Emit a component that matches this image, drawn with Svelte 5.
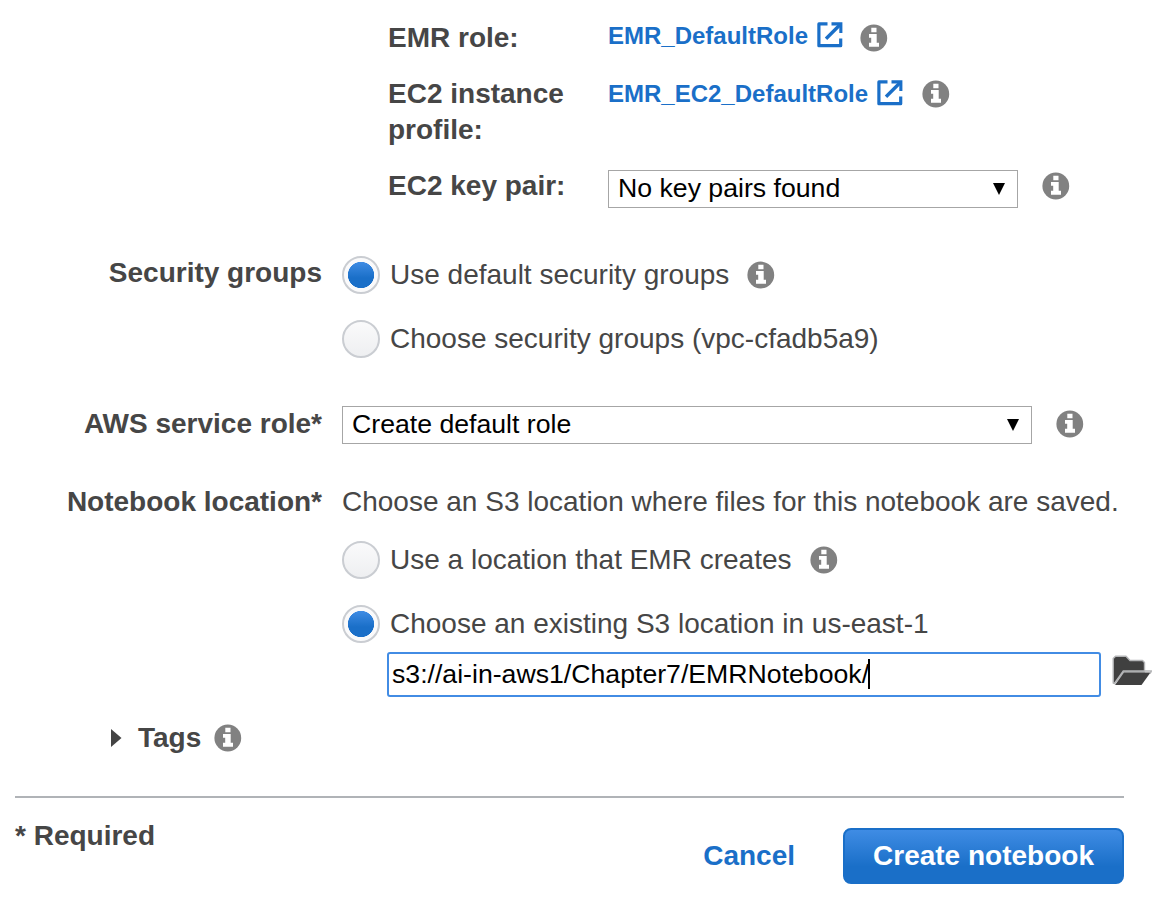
<script>
  let securityGroup = $state('default');
  let location = $state('existing');
  let path = $state('s3://ai-in-aws1/Chapter7/EMRNotebook/');
</script>

{#snippet info(cls)}
  <svg class="info {cls}" viewBox="0 0 28 28" width="28" height="28">
    <circle cx="13.8" cy="14" r="13.4" fill="#818181" />
    <path fill="#fff" d="M11.300 3.700h5.200V8.200h-5.200zM9 9.900h7.700v8.900H19v4H9v-4h2.200v-5H9z" />
  </svg>
{/snippet}

{#snippet external()}
  <svg class="ext" viewBox="0 0 26 26" width="26" height="26">
    <path fill="none" stroke="#1a6fc8" stroke-width="3.200" stroke-linejoin="round" d="M10.500 1.900H1.900V23.700H23.700V16.500" />
    <path fill="none" stroke="#1a6fc8" stroke-width="3.400" d="M9 16.700L23 2.700" />
    <path fill="#1a6fc8" d="M14.500 .3h10.900V11h-3.100V3.400h-7.800z" />
  </svg>
{/snippet}

{#snippet radio(on, pick)}
  <button class="radio" class:on onclick={pick} aria-label="option"></button>
{/snippet}

<main>
  <section class="cluster">
    <div class="row r1">
      <b class="name">EMR role:</b>
      <a class="link" href="#top">EMR_DefaultRole{@render external()}</a>
      {@render info('i1')}
    </div>
    <div class="row r2">
      <b class="name">EC2 instance profile:</b>
      <a class="link" href="#top">EMR_EC2_DefaultRole{@render external()}</a>
      {@render info('i2')}
    </div>
    <div class="row r3">
      <b class="name">EC2 key pair:</b>
      <div class="select key"><span>No key pairs found</span><i></i></div>
      {@render info('i3')}
    </div>
  </section>

  <section class="row security">
    <b class="label">Security groups</b>
    <div class="field">
      <div class="option">
        {@render radio(securityGroup === 'default', () => (securityGroup = 'default'))}
        <span>Use default security groups</span>
        {@render info('i4')}
      </div>
      <div class="option">
        {@render radio(securityGroup === 'choose', () => (securityGroup = 'choose'))}
        <span>Choose security groups (vpc-cfadb5a9)</span>
      </div>
    </div>
  </section>

  <section class="row service">
    <b class="label">AWS service role*</b>
    <div class="select role"><span>Create default role</span><i></i></div>
    {@render info('i5')}
  </section>

  <section class="row location">
    <b class="label">Notebook location*</b>
    <div class="field">
      <p>Choose an S3 location where files for this notebook are saved.</p>
      <div class="option">
        {@render radio(location === 'new', () => (location = 'new'))}
        <span>Use a location that EMR creates</span>
        {@render info('i6')}
      </div>
      <div class="option">
        {@render radio(location === 'existing', () => (location = 'existing'))}
        <span>Choose an existing S3 location in us-east-1</span>
      </div>
      <div class="pathrow">
        <div class="input"><span>{path}</span><i></i></div>
        <svg class="folder" width="40" height="31" viewBox="0 0 40 31">
          <path fill="#404040" stroke="#b4b5b7" stroke-width="1.400" stroke-linejoin="round" d="M1.200 28V3.500L3.500 1.200h10.500l4 4.300h12.500l2 2V17H12L2.500 28.500z" />
          <path fill="#404040" d="M3 30L12 17.500h26.500L29.500 30z" />
          <path fill="none" stroke="#b4b5b7" stroke-width="1.500" d="M2.500 28.500L11.300 16H39.500L38 18.500" />
        </svg>
      </div>
    </div>
  </section>

  <div class="tags">
    <svg width="11" height="18" viewBox="0 0 11 18"><path fill="#444" d="M0 0l10.500 9L0 18z" /></svg>
    <b>Tags</b>
    {@render info('i7')}
  </div>

  <footer>
    <b class="required">* Required</b>
    <a class="cancel" href="#top">Cancel</a>
    <button class="create">Create notebook</button>
  </footer>
</main>

<style>
  :global(body) { margin: 0; background: #fff; }
  main {
    box-sizing: border-box;
    width: 1172px;
    height: 908px;
    overflow: hidden;
    padding-top: 18px;
    font: 28px/36px "Liberation Sans", Arial, sans-serif;
    color: #464646;
  }
  .row { display: flex; align-items: flex-start; }
  .cluster { padding-left: 388px; }
  .r1 { height: 58px; }
  .r1 .name { padding-top: 2px; }
  .r2 { height: 92px; }
  .r3 { height: 87px; }
  .name { width: 220px; box-sizing: border-box; padding-right: 30px; flex: none; }
  .link { display: flex; font-size: 24px; font-weight: bold; color: #1a6fc8; text-decoration: none; white-space: nowrap; }
  .ext { margin: 4px 0 0 9px; }
  .info { display: block; flex: none; }
  .i1 { margin: 6px 0 0 17px; }
  .i2 { margin: 4px 0 0 19px; }
  .i3 { margin: 4px 0 0 24px; }
  .i4 { margin: 5px 0 0 18px; }
  .i5 { margin: 4px 0 0 24px; }
  .i6 { margin: 5px 0 0 18.500px; }
  .i7 { margin: 4px 0 0 13px; }
  .select {
    box-sizing: border-box;
    height: 38px;
    border: 1px solid #a6a6a6;
    display: flex;
    align-items: center;
    justify-content: space-between;
    padding: 0 12px 0 9px;
    color: #000;
    font-size: 26.67px;
    line-height: 36px;
    white-space: nowrap;
  }
  .select span { padding-bottom: 2px; line-height: 34px; }
  .select i { border: 6px solid transparent; border-top: 12px solid #000; border-bottom: 0; }
  .key { width: 410px; margin-top: 2px; }
  .role { width: 690px; }
  .label { width: 322px; margin-right: 20px; flex: none; text-align: right; white-space: nowrap; }
  .security { height: 151px; }
  .service { height: 78px; }
  .location { height: 236px; }
  .option { display: flex; height: 64px; padding-top: 1px; box-sizing: border-box; white-space: nowrap; }
  .option span { padding-top: 1px; }
  .radio {
    appearance: none;
    box-sizing: border-box;
    flex: none;
    width: 38px;
    height: 38px;
    margin: 0 10px 0 0;
    padding: 0;
    border: 2px solid #cacdd2;
    border-radius: 50%;
    background: linear-gradient(#fafafb, #eeeff1);
  }
  .radio.on {
    background: radial-gradient(circle at 50% 50%, transparent 12.800px, #fafafb 13.400px), linear-gradient(#3f8ce4 4px, #1a6fc8 20px);
  }
  p { margin: 0; height: 56px; white-space: nowrap; }
  .pathrow { display: flex; margin-left: 45px; margin-top: -16px; }
  .input {
    box-sizing: border-box;
    width: 714px;
    height: 45px;
    border: 2px solid #428ce4;
    border-radius: 3px;
    display: flex;
    align-items: center;
    padding-left: 3px;
    font-size: 26.67px;
    line-height: 38px;
    color: #000;
  }
  .input span { padding-bottom: 2px; margin-right: -1px; }
  .input i { width: 2px; height: 30px; margin-bottom: 1px; background: #000; }
  .folder { margin: 3px 0 0 11px; flex: none; }
  .tags { display: flex; height: 76px; padding-left: 111px; }
  .tags > svg:first-child { margin-top: 9px; }
  .tags b { margin-left: 16px; }
  footer {
    display: flex;
    width: 1109px;
    margin-left: 15px;
    border-top: 2px solid #b0b3b7;
  }
  .required { margin-top: 20px; }
  .cancel { margin: 40px 48px 0 auto; font-weight: bold; color: #1a6fc8; text-decoration: none; }
  .create {
    box-sizing: border-box;
    width: 281px;
    height: 56px;
    margin: 30px 0 0;
    padding: 0;
    border: 2px solid #1a6fc8;
    border-radius: 8px;
    background: linear-gradient(#3f8ce4, #1a6fc8 70%);
    color: #fff;
    font: bold 28px/36px "Liberation Sans", Arial, sans-serif;
  }
</style>
